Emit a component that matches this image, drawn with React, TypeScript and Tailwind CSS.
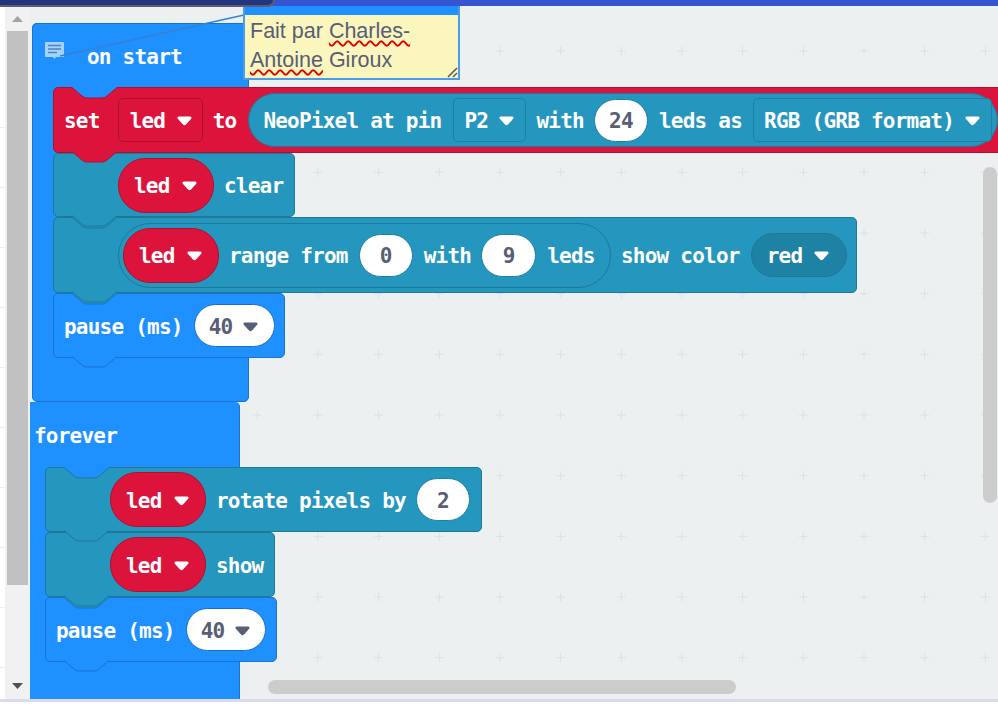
import type { ReactNode } from "react";

const mono = "font-['DejaVu_Sans_Mono',monospace] font-bold text-[21px] tracking-[-0.77px] leading-none whitespace-pre";

function T({ children }: { children: ReactNode }) {
  return <span className="pt-[3px]">{children}</span>;
}

function Caret({ dark }: { dark?: boolean }) {
  return (
    <svg width="15" height="10" viewBox="0 0 15 10" className="mt-[2px] shrink-0">
      <path
        d="M2 .5h11c1.400 0 2 1.200 1.200 2.200L9 8.500c-.8.9-2.200.9-3 0L.8 2.700C0 1.700.6.500 2 .5z"
        fill={dark ? "#575e75" : "#fff"}
      />
    </svg>
  );
}

// connector tab hanging under a stack block
function Tab({ fill, stroke }: { fill: string; stroke: string }) {
  return (
    <svg width="46" height="12" viewBox="0 0 46 12" className="absolute left-[18px] top-full -mt-px z-10">
      <path d="M0 0.500 L10 9 Q12 11 15 11 H30 Q33 11 35 9 L45 0.500 V0 H0 Z" fill={fill} />
      <path d="M0 0.500 L10 9 Q12 11 15 11 H30 Q33 11 35 9 L45 0.500" fill="none" stroke={stroke} />
    </svg>
  );
}

// the socket cut in the top edge of a stack block shows the colour above it
function Socket({ fill, stroke }: { fill: string; stroke: string }) {
  return (
    <svg width="46" height="12" viewBox="0 0 46 12" className="absolute left-[18px] -top-px">
      <path d="M0 0.500 L10 9 Q12 11 15 11 H30 Q33 11 35 9 L45 0.500 V0 H0 Z" fill={fill} />
      <path d="M0 0.500 L10 9 Q12 11 15 11 H30 Q33 11 35 9 L45 0.500" fill="none" stroke={stroke} />
    </svg>
  );
}

function LedPill() {
  return (
    <div className="flex h-[55px] w-[96px] shrink-0 items-center rounded-[27px] border border-[#b01030] bg-[#dc143c] pl-[15px] text-white">
      <T>led</T>
      <span className="ml-[12px] flex"><Caret /></span>
    </div>
  );
}

function Num({ children, w, h = 43 }: { children: ReactNode; w: number; h?: number }) {
  return (
    <div
      className="flex shrink-0 items-center justify-center rounded-full border border-[#1e7fa3] bg-white text-[#575e75]"
      style={{ width: w, height: h }}
    >
      <T>{children}</T>
    </div>
  );
}

function Drop({ label, w }: { label: string; w: number }) {
  return (
    <div
      className="flex h-[44px] shrink-0 items-center justify-between rounded-[5px] border border-[#1e7fa3] bg-[#2596be] pl-[10px] pr-[11px] text-white"
      style={{ width: w }}
    >
      <T>{label}</T>
      <Caret />
    </div>
  );
}

function PauseField({ w }: { w: number }) {
  return (
    <div
      className="flex h-[43px] shrink-0 items-center rounded-full border border-[#1a6fc4] bg-white pl-[14px] text-[#575e75]"
      style={{ width: w }}
    >
      <T>40</T>
      <span className="ml-[11px] flex"><Caret dark /></span>
    </div>
  );
}

const rows = [127, 187, 247, 307, 367, 427, 487, 547, 607, 667];
const blue = "#1e90ff";
const blueEdge = "#1a73cc";
const teal = "#2596be";
const tealEdge = "#1e7898";
const red = "#dc143c";
const redEdge = "#b01030";

export default function App() {
  return (
    <div className="flex h-[710px] w-[998px] flex-col overflow-hidden bg-white">
      <div className={`relative flex h-[699px] ${mono}`}>
        {/* left edge */}
        <div className="relative h-full w-[5px] bg-white">
          {rows.map((y) => (
            <div key={y} className="absolute left-0 h-px w-[5px] bg-[#efefef]" style={{ top: y }} />
          ))}
        </div>

        {/* page scrollbar */}
        <div className="flex w-[25px] flex-col items-center bg-[#f1f1f1] pt-[16px]">
          <svg width="11" height="15" viewBox="0 0 11 15" className="shrink-0">
            <path d="M5.500 0 L11 6 H0 Z" fill="#a3a3a3" />
          </svg>
          <div className="h-[554px] w-[21px] bg-[#c1c1c1]" />
          <svg width="11" height="6" viewBox="0 0 11 6" className="mt-[98px] shrink-0">
            <path d="M0 0 H11 L5.500 6 Z" fill="#505050" />
          </svg>
        </div>

        {/* workspace */}
        <div className="relative h-full flex-1 overflow-hidden bg-[#ecf0f1]">
          <svg className="absolute inset-0 h-full w-full">
            <defs>
              <pattern id="dots" x="45.320" y="51" width="60.67" height="60.67" patternUnits="userSpaceOnUse" patternTransform="translate(-4.500 -4.500)">
                <path d="M0 4.500 H9 M4.500 0 V9" stroke="#dce1e3" strokeWidth="1" />
              </pattern>
            </defs>
            <rect width="100%" height="100%" fill="url(#dots)" />
          </svg>

          {/* on start */}
          <div className="absolute left-[2px] top-[23px] h-[379px] w-[217px] rounded-[5px] border border-[#1a73cc] bg-[#1e90ff]" />
          <div className="absolute left-[2px] top-[23px] z-10 flex h-[64px] w-[217px] items-center rounded-t-[5px] border border-b-0 border-[#1a73cc] bg-[#1e90ff] pl-[54px] text-white">
            <T>on start</T>
            <svg width="19" height="17" viewBox="0 0 19 17" className="absolute left-[12px] top-[18px]">
              <path d="M1 0h17a1 1 0 0 1 1 1v13a1 1 0 0 1-1 1H11l-1.500 2-1.500-2H1a1 1 0 0 1-1-1V1a1 1 0 0 1 1-1z" fill="#a6d1fc" />
              <path d="M3 3.500h13M3 7h13M3 10.500h9" stroke="#4a86c0" strokeWidth="1.500" />
            </svg>
          </div>

          {/* comment leader */}
          <svg className="absolute left-0 top-0 z-20 h-[80px] w-[230px]">
            <path d="M30 56 L214 15" stroke="#3583d0" strokeWidth="1.500" fill="none" />
          </svg>

          {/* set led to */}
          <div className="absolute left-[23px] top-[87px] z-10 flex h-[66px] w-[990px] items-center rounded-[5px] border border-[#b01030] bg-[#dc143c] pl-[10px] text-white">
            <Socket fill={blue} stroke={redEdge} />
            <Tab fill={red} stroke={redEdge} />
            <T>set</T>
            <div className="ml-[18px] flex h-[44px] w-[85px] shrink-0 items-center rounded-[5px] border border-[#b01030] bg-[#dc143c] pl-[11px]">
              <T>led</T>
              <span className="ml-[12px] flex"><Caret /></span>
            </div>
            <span className="ml-[10px] pt-[3px]">to</span>
            <div className="ml-[12px] flex h-[54px] w-[750px] shrink-0 items-center rounded-[27px] border border-[#1e7898] bg-[#2596be] pl-[14px]">
              <T>NeoPixel at pin</T>
              <div className="ml-[12px]"><Drop label="P2" w={73} /></div>
              <span className="ml-[10px] pt-[3px]">with</span>
              <div className="ml-[10px]"><Num w={54}>24</Num></div>
              <span className="ml-[11px] pt-[3px]">leds as</span>
              <div className="ml-[11px]"><Drop label="RGB (GRB format)" w={239} /></div>
            </div>
          </div>

          {/* led clear */}
          <div className="absolute left-[23px] top-[153px] flex h-[64px] w-[242px] items-center rounded-[5px] border border-[#1e7898] bg-[#2596be] pl-[64px] text-white">
            <LedPill />
            <span className="ml-[10px] pt-[3px]">clear</span>
            <Tab fill={teal} stroke={tealEdge} />
          </div>

          {/* range show color */}
          <div className="absolute left-[23px] top-[217px] flex h-[76px] w-[804px] items-center rounded-[5px] border border-[#1e7898] bg-[#2596be] pl-[64px] text-white">
            <Socket fill={teal} stroke={tealEdge} />
            <Tab fill={teal} stroke={tealEdge} />
            <div className="flex h-[65px] w-[493px] shrink-0 items-center rounded-[33px] border border-[#1e7898] pl-[4px]">
              <LedPill />
              <span className="ml-[10px] pt-[3px]">range from</span>
              <div className="ml-[11px]"><Num w={54}>0</Num></div>
              <span className="ml-[11px] pt-[3px]">with</span>
              <div className="ml-[10px]"><Num w={55}>9</Num></div>
              <span className="ml-[11px] pt-[3px]">leds</span>
            </div>
            <span className="ml-[10px] pt-[3px]">show color</span>
            <div className="ml-[11px] flex h-[44px] w-[96px] shrink-0 items-center rounded-full border border-[#1e7898] bg-[#1e82a5] pl-[15px]">
              <T>red</T>
              <span className="ml-[12px] flex"><Caret /></span>
            </div>
          </div>

          {/* pause */}
          <div className="absolute left-[23px] top-[293px] flex h-[65px] w-[232px] items-center rounded-[5px] border border-[#1a73cc] bg-[#1e90ff] pl-[10px] text-white">
            <Socket fill={teal} stroke={blueEdge} />
            <Tab fill={blue} stroke={blueEdge} />
            <T>pause (ms)</T>
            <div className="ml-[11px]"><PauseField w={81} /></div>
          </div>

          {/* forever */}
          <div className="absolute -left-[5px] top-[402px] h-[310px] w-[215px] rounded-tr-[5px] border-r border-[#1a73cc] bg-[#1e90ff]" />
          <div className="absolute left-0 top-[402px] flex h-[65px] items-center pl-[4px] text-white">
            <T>forever</T>
          </div>

          <div className="absolute left-[15px] top-[467px] flex h-[65px] w-[437px] items-center rounded-[5px] border border-[#1e7898] bg-[#2596be] pl-[64px] text-white">
            <Socket fill={blue} stroke={tealEdge} />
            <LedPill />
            <span className="ml-[10px] pt-[3px]">rotate pixels by</span>
            <div className="ml-[10px]"><Num w={54}>2</Num></div>
            <Tab fill={teal} stroke={tealEdge} />
          </div>
          <div className="absolute left-[15px] top-[532px] flex h-[65px] w-[230px] items-center rounded-[5px] border border-[#1e7898] bg-[#2596be] pl-[64px] text-white">
            <LedPill />
            <span className="ml-[10px] pt-[3px]">show</span>
            <Tab fill={teal} stroke={tealEdge} />
          </div>
          <div className="absolute left-[15px] top-[597px] flex h-[65px] w-[232px] items-center rounded-[5px] border border-[#1a73cc] bg-[#1e90ff] pl-[10px] text-white">
            <Socket fill={teal} stroke={blueEdge} />
            <T>pause (ms)</T>
            <div className="ml-[11px]"><PauseField w={80} /></div>
            <Tab fill={blue} stroke={blueEdge} />
          </div>

          {/* comment box */}
          <div className="absolute left-[213px] top-[-1px] z-30 h-[81px] w-[217px] border-2 border-[#4a9cec] bg-[#fbf6bd] font-['Liberation_Sans',sans-serif] text-[21.5px] font-normal leading-[29px] tracking-normal text-[#575e75]">
            <div className="h-[14px] bg-[#1e90ff]" />
            <div className="whitespace-normal pl-[5px] pt-[2px]">
              <div>Fait par <span className="underline decoration-[#e00000] decoration-wavy decoration-[1.5px] underline-offset-2">Charles-</span></div>
              <div><span className="underline decoration-[#e00000] decoration-wavy decoration-[1.5px] underline-offset-2">Antoine</span> Giroux</div>
            </div>
            <svg width="11" height="11" viewBox="0 0 11 11" className="absolute bottom-0 right-0">
              <path d="M1 10 L10 1 M6 10 L10 6" stroke="#555" strokeWidth="1.500" />
            </svg>
          </div>

          {/* workspace scrollbars */}
          <div className="absolute left-[953px] top-[167px] h-[336px] w-[14px] rounded-full bg-[#cccccc]" />
          <div className="absolute left-[238px] top-[680px] h-[14px] w-[468px] rounded-full bg-[#cccccc]" />
        </div>

        {/* top bar */}
        <div className="absolute left-0 top-0 z-40 h-[6px] w-full bg-[#3454d1]">
          <div className="h-[7px] w-[275px] rounded-br-[14px] border-b-2 border-r-2 border-[#5a6070] bg-[#23357e]" />
        </div>
      </div>
      <div className="h-[3px] bg-[#dcdaf0]" />
    </div>
  );
}
